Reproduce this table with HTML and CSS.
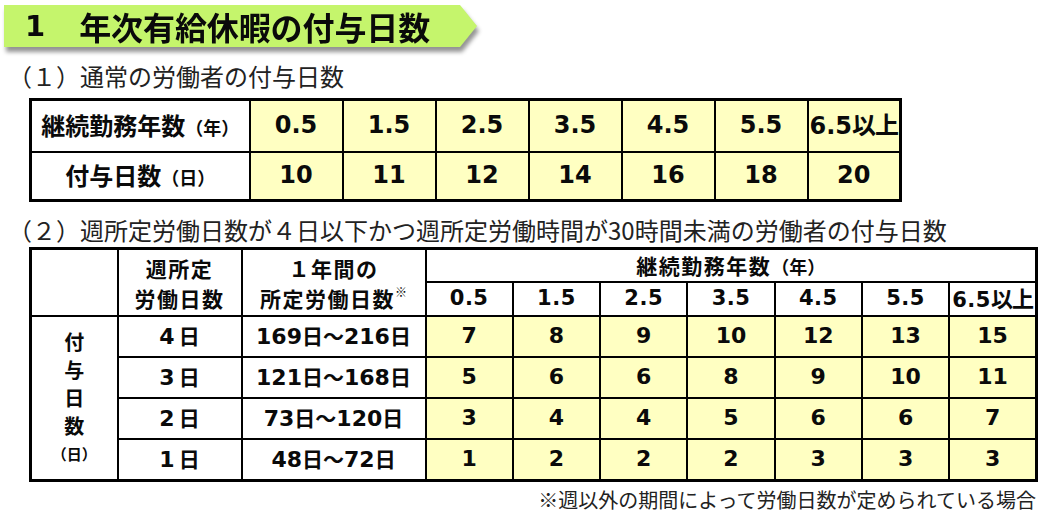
FILE: index.html
```html
<!DOCTYPE html>
<html lang="ja">
<head>
<meta charset="utf-8">
<link rel="stylesheet" href="styles.css">
</head>
<body>
<div class="page">
  <div class="banner-wrap">
    <div class="banner"><span class="bn-num">1</span><span class="bn-text">年次有給休暇の付与日数</span></div>
  </div>

  <h2 class="sec sec1">（１）通常の労働者の付与日数</h2>

  <table class="t1">
    <colgroup>
      <col class="c1-label">
      <col span="7" class="c1-val">
    </colgroup>
    <tr class="t1-r1">
      <th class="lbl">継続勤務年数<small>（年）</small></th>
      <td class="y">0.5</td><td class="y">1.5</td><td class="y">2.5</td><td class="y">3.5</td><td class="y">4.5</td><td class="y">5.5</td><td class="y">6.5<span class="jp">以上</span></td>
    </tr>
    <tr class="t1-r2">
      <th class="lbl">付与日数<small>（日）</small></th>
      <td class="y">10</td><td class="y">11</td><td class="y">12</td><td class="y">14</td><td class="y">16</td><td class="y">18</td><td class="y">20</td>
    </tr>
  </table>

  <h2 class="sec sec2">（２）週所定労働日数が４日以下かつ週所定労働時間が30時間未満の労働者の付与日数</h2>

  <table class="t2">
    <colgroup>
      <col class="c2-a">
      <col class="c2-b">
      <col class="c2-c">
      <col span="7" class="c2-val">
    </colgroup>
    <tr class="t2-h1">
      <th rowspan="2"></th>
      <th rowspan="2" class="hd"><span class="ln">週所定</span><span class="ln">労働日数</span></th>
      <th rowspan="2" class="hd"><span class="ln">１年間の</span><span class="ln">所定労働日数<sup>※</sup></span></th>
      <th colspan="7" class="hd">継続勤務年数<small>（年）</small></th>
    </tr>
    <tr class="t2-h2">
      <th class="yr">0.5</th><th class="yr">1.5</th><th class="yr">2.5</th><th class="yr">3.5</th><th class="yr">4.5</th><th class="yr">5.5</th><th class="yr">6.5<span class="jp">以上</span></th>
    </tr>
    <tr class="t2-b">
      <th rowspan="4" class="side">
        <span class="stack"><span>付</span><span>与</span><span>日</span><span>数</span><span class="sm">（日）</span></span>
      </th>
      <td class="w">4<span class="jp d">日</span></td>
      <td class="w">169<span class="jp">日～</span>216<span class="jp">日</span></td>
      <td class="y">7</td><td class="y">8</td><td class="y">9</td><td class="y">10</td><td class="y">12</td><td class="y">13</td><td class="y">15</td>
    </tr>
    <tr class="t2-b">
      <td class="w">3<span class="jp d">日</span></td>
      <td class="w">121<span class="jp">日～</span>168<span class="jp">日</span></td>
      <td class="y">5</td><td class="y">6</td><td class="y">6</td><td class="y">8</td><td class="y">9</td><td class="y">10</td><td class="y">11</td>
    </tr>
    <tr class="t2-b">
      <td class="w">2<span class="jp d">日</span></td>
      <td class="w">73<span class="jp">日～</span>120<span class="jp">日</span></td>
      <td class="y">3</td><td class="y">4</td><td class="y">4</td><td class="y">5</td><td class="y">6</td><td class="y">6</td><td class="y">7</td>
    </tr>
    <tr class="t2-b">
      <td class="w">1<span class="jp d">日</span></td>
      <td class="w">48<span class="jp">日～</span>72<span class="jp">日</span></td>
      <td class="y">1</td><td class="y">2</td><td class="y">2</td><td class="y">2</td><td class="y">3</td><td class="y">3</td><td class="y">3</td>
    </tr>
  </table>

  <p class="note">※週以外の期間によって労働日数が定められている場合</p>
</div>
</body>
</html>
```

FILE: styles.css
```css
* { box-sizing: border-box; }

body {
  margin: 0;
  background: #ffffff;
  font-family: "Noto Sans CJK JP", sans-serif;
  color: #111;
}

.page {
  width: 1057px;
  height: 515px;
  padding-top: 5px;
  overflow: hidden;
}

/* ---------- title banner ---------- */
.banner-wrap {
  width: 473px;
  margin-left: 4px;
  filter: drop-shadow(2px 5px 2px rgba(0, 0, 0, 0.42));
}

.banner {
  height: 42px;
  background: #c5f56c;
  clip-path: polygon(0 0, calc(100% - 17px) 0, 100% 50%, calc(100% - 17px) 100%, 0 100%);
  display: flex;
  align-items: center;
  gap: 34px;
  padding-left: 21px;
  color: #0a0a0a;
  line-height: 1;
}

.bn-num {
  font-family: "DejaVu Sans", sans-serif;
  font-weight: 700;
  font-size: 29px;
}

.bn-text {
  font-weight: 700;
  font-size: 32px;
  letter-spacing: -0.1px;
}

/* ---------- section headings ---------- */
.sec {
  margin: 0;
  padding-left: 8px;
  font-weight: 400;
  font-size: 24px;
  line-height: 30px;
  color: #222;
}

.sec1 { margin-top: 14px; }
.sec2 { margin-top: 13px; }

/* ---------- tables common ---------- */
table {
  border-collapse: collapse;
  table-layout: fixed;
  border: 3px solid #000;
}

th, td {
  border: 2px solid #000;
  padding: 0;
  text-align: center;
  vertical-align: middle;
  font-family: "DejaVu Sans", "Noto Sans CJK JP", sans-serif;
  font-weight: 700;
  color: #0a0a0a;
  white-space: nowrap;
  line-height: 1.2;
}

.jp {
  font-family: "Noto Sans CJK JP", sans-serif;
}

small {
  font-family: "Noto Sans CJK JP", sans-serif;
  font-size: 18px;
}

.y { background: #ffffc2; }
.w { background: #fff; }

/* ---------- table 1 ---------- */
.t1 {
  margin: 7px 0 0 29px;
  width: 873px;
}

.c1-label { width: 219px; }

.t1 th.lbl {
  font-family: "Noto Sans CJK JP", sans-serif;
  font-size: 24px;
  background: #fff;
}

.t1 td {
  font-size: 24px;
}

.t1 td .jp { font-size: 24px; letter-spacing: -1px; }

.t1-r1 { height: 52px; }
.t1-r2 { height: 49px; }

/* ---------- table 2 ---------- */
.t2 {
  margin: 2px 0 0 29px;
  width: 1009px;
}

.c2-a { width: 87px; }
.c2-b { width: 124px; }
.c2-c { width: 184px; }

.t2 th { background: #fff; }

.t2 .hd {
  font-family: "Noto Sans CJK JP", sans-serif;
  font-size: 21px;
  letter-spacing: 1.5px;
  line-height: 30px;
}

.t2 .hd .ln { display: block; }

.t2 .hd sup {
  font-size: 12px;
  vertical-align: 10px;
  line-height: 0;
  letter-spacing: 0;
}

.t2 .hd small { font-size: 18px; letter-spacing: 0; }

.t2-h1 { height: 33px; }
.t2-h2 { height: 34px; }

.t2 .yr {
  font-size: 21px;
  letter-spacing: 0.5px;
}

.t2 .yr .jp { font-size: 22px; letter-spacing: -1px; }

.t2-b { height: 41px; }

.t2-b td {
  font-size: 22px;
}

.t2-b td .jp { font-size: 21px; }
.t2-b td .d { margin-left: 4px; }

.side .stack {
  display: flex;
  flex-direction: column;
  align-items: center;
  font-family: "Noto Sans CJK JP", sans-serif;
  font-size: 20px;
  line-height: 28px;
}

.side .stack .sm { font-size: 15px; }

/* ---------- footnote ---------- */
.note {
  margin: 5px 0 0 0;
  width: 1036px;
  text-align: right;
  font-size: 20px;
  line-height: 26px;
  color: #222;
}
```
